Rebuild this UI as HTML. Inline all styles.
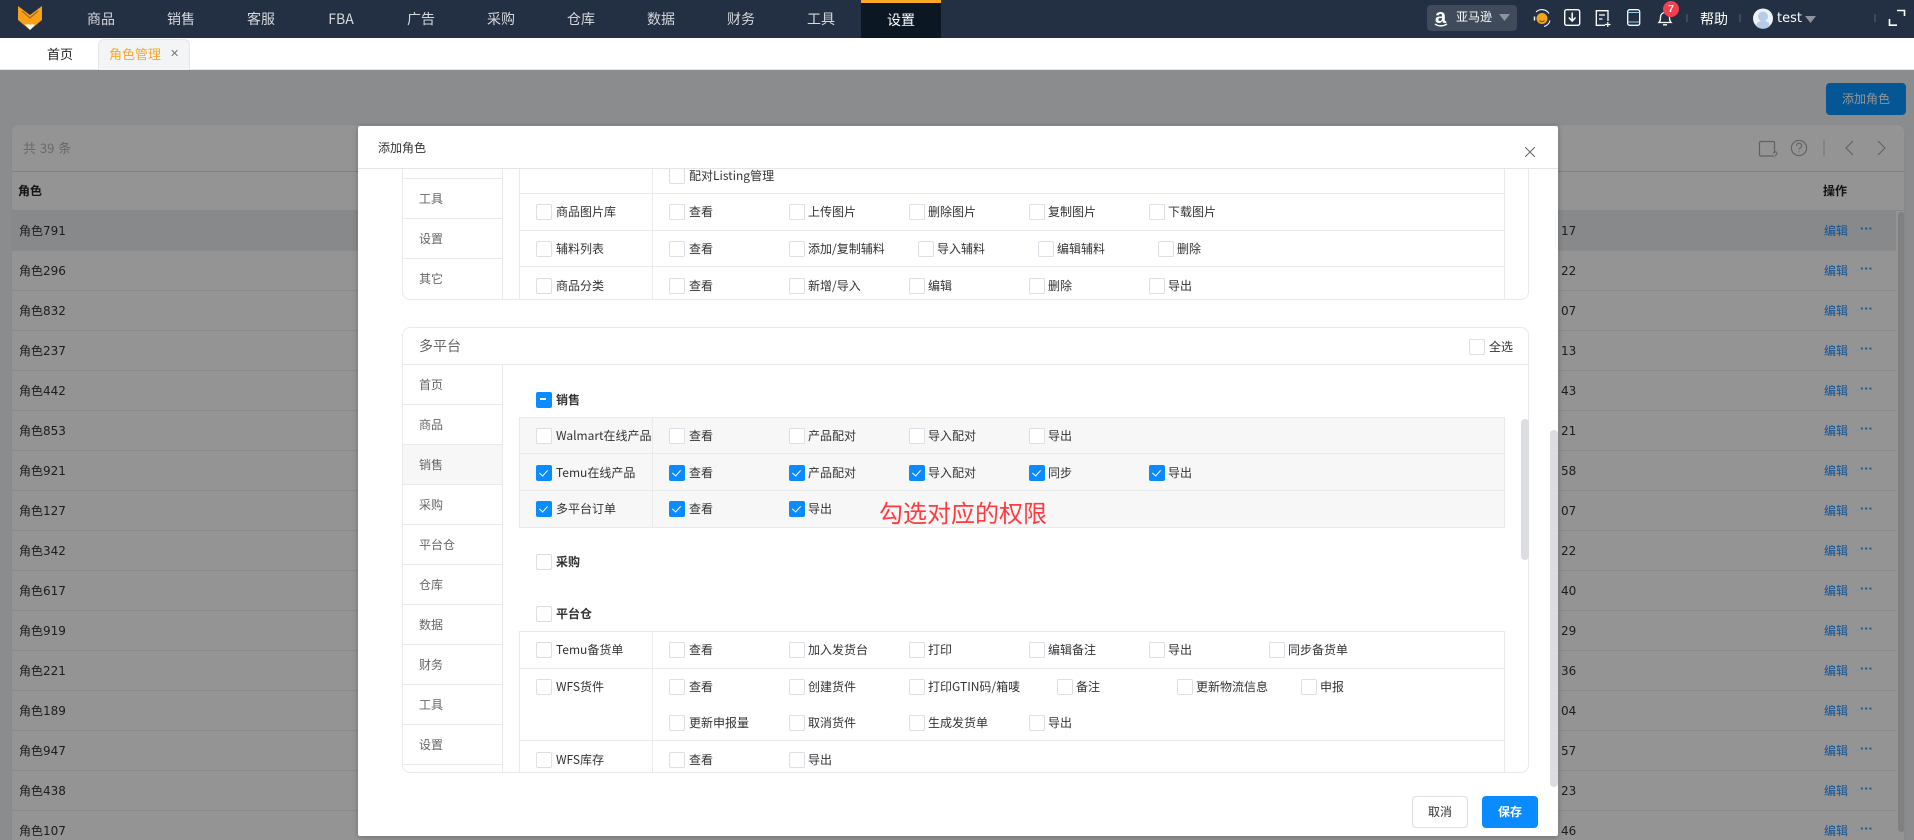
<!DOCTYPE html>
<html lang="zh"><head><meta charset="utf-8"><title>角色管理</title>
<style>
*{box-sizing:border-box}
html,body{margin:0;padding:0;width:1914px;height:840px;overflow:hidden;background:#f0f2f5;font:12px/16px "Liberation Sans","Noto Sans CJK SC",sans-serif;color:#333}
body{position:relative;font-family:"Noto Sans CJK SC","Liberation Sans",sans-serif}
div,span,label,svg{position:absolute}
.x{white-space:nowrap;line-height:16px}
.l{background:#e8eaec}
#nav{left:0;top:0;width:1914px;height:38px;background:#232f42;z-index:7}
#nav .n{top:0;width:80px;height:38px;text-align:center;line-height:38px;font-size:14px;color:#d5d8dc}
#tabs{left:0;top:38px;width:1914px;height:32px;background:#fff;border-bottom:1px solid #e4e6e9;z-index:7}
#ov{left:0;top:70px;width:1914px;height:770px;background:rgba(0,0,0,.42);z-index:5}
#card{left:11px;top:124px;width:1894px;height:716px;background:#fff;border:1px solid #eee;border-bottom:0;border-radius:8px 8px 0 0;overflow:hidden}
.r{left:0;width:1884px;height:40px;border-bottom:1px solid #eef0f2}
.r b,.r i,.r u,.r em{position:absolute;font-style:normal;font-weight:400;text-decoration:none;top:12px;line-height:16px;font-size:12px;color:#333}
.r b,.r i{font-family:"DejaVu Sans","Noto Sans CJK SC",sans-serif}
.r b{left:7px}.r i{left:1549px}.r u{left:1812px;color:#1f8fff;font-size:12px}
.r em{left:1848px;top:10px;color:#1f8fff;font:700 13px/16px "Liberation Sans",sans-serif}
#modal{left:358px;top:126px;width:1200px;height:710px;background:#fff;z-index:6;box-shadow:0 1px 6px rgba(0,0,0,.25);border-radius:2px}
#clip{left:0;top:43px;width:1200px;height:625px;overflow:hidden}
#in{left:-358px;top:-169px;width:1914px;height:840px}
.p{height:16px;padding-left:19px;line-height:15px;white-space:nowrap;font-size:12px;color:#333}
.q{padding-left:20px}
.p:before{content:"";position:absolute;left:0;top:0;width:14px;height:14px;background:#fff;border:1px solid #dcdfe6;border-radius:2px}
.k:before{background:#0a8bff;border-color:#0a8bff}
.k:after{content:"";position:absolute;left:4.5px;top:2.5px;width:4px;height:7px;border:solid #fff;border-width:0 1.2px 1.2px 0;transform:rotate(42deg)}
.m:before{background:#0a8bff;border-color:#0a8bff}
.m:after{content:"";position:absolute;left:4px;top:6px;width:6px;height:1.5px;background:#fff}
.g{font-weight:700;color:#333}
.a{color:#666;left:419px}
.box{border:1px solid #e8eaec}
</style></head><body>

<div id="card">
<div style="left:11px;top:15px;font-size:13px;line-height:16px;color:#b5b5b5;word-spacing:1px" class="x">共 39 条</div>
<div class="l" style="left:0;top:46px;width:1892px;height:1px;background:#ddd"></div>
<div class="x" style="left:6px;top:58px;font-weight:700;color:#222">角色</div>
<div class="x" style="left:1811px;top:58px;font-weight:700;color:#222">操作</div>
<div class="l" style="left:0;top:85px;width:1892px;height:1px"></div>
<div style="left:0;top:86px;width:1892px;height:640px">
<div class="r" style="top:0;background:#e8ecf0"><b>角色791</b><i>17</i><u>编辑</u><em>···</em></div>
<div class="r" style="top:40px"><b>角色296</b><i>22</i><u>编辑</u><em>···</em></div>
<div class="r" style="top:80px"><b>角色832</b><i>07</i><u>编辑</u><em>···</em></div>
<div class="r" style="top:120px"><b>角色237</b><i>13</i><u>编辑</u><em>···</em></div>
<div class="r" style="top:160px"><b>角色442</b><i>43</i><u>编辑</u><em>···</em></div>
<div class="r" style="top:200px"><b>角色853</b><i>21</i><u>编辑</u><em>···</em></div>
<div class="r" style="top:240px"><b>角色921</b><i>58</i><u>编辑</u><em>···</em></div>
<div class="r" style="top:280px"><b>角色127</b><i>07</i><u>编辑</u><em>···</em></div>
<div class="r" style="top:320px"><b>角色342</b><i>22</i><u>编辑</u><em>···</em></div>
<div class="r" style="top:360px"><b>角色617</b><i>40</i><u>编辑</u><em>···</em></div>
<div class="r" style="top:400px"><b>角色919</b><i>29</i><u>编辑</u><em>···</em></div>
<div class="r" style="top:440px"><b>角色221</b><i>36</i><u>编辑</u><em>···</em></div>
<div class="r" style="top:480px"><b>角色189</b><i>04</i><u>编辑</u><em>···</em></div>
<div class="r" style="top:520px"><b>角色947</b><i>57</i><u>编辑</u><em>···</em></div>
<div class="r" style="top:560px"><b>角色438</b><i>23</i><u>编辑</u><em>···</em></div>
<div class="r" style="top:600px"><b>角色107</b><i>46</i><u>编辑</u><em>···</em></div>
</div>
<div style="left:1886px;top:87px;width:7px;height:620px;background:#dcdcdc;border-radius:4px"></div>
</div>
<div style="left:1826px;top:83px;width:80px;height:32px;background:#0894ff;border-radius:4px;color:#fff;text-align:center;line-height:32px">添加角色</div>
<svg style="left:1750px;top:135px" width="150" height="26" viewBox="0 0 150 26" fill="none" stroke="#a8a8a8">
<path d="M24 21H10.500A1.500 1.500 0 0 1 9.500 19.500V7.500A1.500 1.500 0 0 1 10.500 6.500H23.500A1.500 1.500 0 0 1 24.500 7.500V18" stroke-width="1.200"/>
<path d="M23.500 18.500a1.700 1.700 0 1 1 2.500 1.500c-.7.400-.9.800-.9 1.200M25.100 22.500v.8" stroke-width="1"/>
<circle cx="49" cy="13" r="7.600" stroke-width="1.100"/>
<path d="M46.500 10.800a2.500 2.500 0 1 1 3.500 2.300c-.7.300-1 .8-1 1.500M49 16.200v1" stroke-width="1.100"/>
<path d="M74 4.500v17" stroke="#e4e4e4" stroke-width="2"/>
<path d="M103 6l-7 7 7 7M128 6l7 7-7 7" stroke-width="1.100"/>
</svg>
<div id="ov"></div>

<div id="modal">
<div class="x" style="left:20px;top:14px;color:#333">添加角色</div>
<svg style="left:1167px;top:21px" width="10" height="10" viewBox="0 0 10 10" stroke="#666" stroke-width="1" fill="none"><path d="M0 0L10 10M10 0L0 10"/></svg>
<div class="l" style="left:0;top:42px;width:1200px;height:1px;background:#e4e5ea"></div>
<div id="clip"><div id="in">
<!-- card 1 -->
<div class="box" style="left:402px;top:100px;width:1127px;height:200px;border-radius:8px"></div>
<div class="l" style="left:502px;top:160px;width:1px;height:139px"></div>
<div class="l" style="left:402px;top:178px;width:101px;height:1px"></div>
<div class="l" style="left:402px;top:218px;width:101px;height:1px"></div>
<div class="l" style="left:402px;top:258px;width:101px;height:1px"></div>
<div class="l" style="left:519px;top:160px;width:1px;height:139px"></div>
<div class="l" style="left:652px;top:160px;width:1px;height:139px"></div>
<div class="l" style="left:1504px;top:160px;width:1px;height:139px"></div>
<div class="l" style="left:519px;top:193px;width:986px;height:1px"></div>
<div class="l" style="left:519px;top:230px;width:986px;height:1px"></div>
<div class="l" style="left:519px;top:266px;width:986px;height:1px"></div>
<div class="x a" style="top:191px">工具</div>
<div class="x a" style="top:231px">设置</div>
<div class="x a" style="top:271px">其它</div>
<label class="p q" style="left:669px;top:168px">配对Listing管理</label>
<label class="p q" style="left:536px;top:204px">商品图片库</label>
<label class="p q" style="left:669px;top:204px">查看</label>
<label class="p" style="left:789px;top:204px">上传图片</label>
<label class="p" style="left:909px;top:204px">删除图片</label>
<label class="p" style="left:1029px;top:204px">复制图片</label>
<label class="p" style="left:1149px;top:204px">下载图片</label>
<label class="p q" style="left:536px;top:241px">辅料列表</label>
<label class="p q" style="left:669px;top:241px">查看</label>
<label class="p" style="left:789px;top:241px">添加/复制辅料</label>
<label class="p" style="left:918px;top:241px">导入辅料</label>
<label class="p" style="left:1038px;top:241px">编辑辅料</label>
<label class="p" style="left:1158px;top:241px">删除</label>
<label class="p q" style="left:536px;top:278px">商品分类</label>
<label class="p q" style="left:669px;top:278px">查看</label>
<label class="p" style="left:789px;top:278px">新增/导入</label>
<label class="p" style="left:909px;top:278px">编辑</label>
<label class="p" style="left:1029px;top:278px">删除</label>
<label class="p" style="left:1149px;top:278px">导出</label>

<!-- card 2 -->
<div class="box" style="left:402px;top:327px;width:1127px;height:446px;border-radius:8px"></div>
<div class="x" style="left:419px;top:338px;font-size:14px;color:#666">多平台</div>
<label class="p q" style="left:1469px;top:339px">全选</label>
<div class="l" style="left:402px;top:364px;width:1127px;height:1px"></div>
<div style="left:403px;top:445px;width:99px;height:39px;background:#f7f7f7"></div>
<div class="l" style="left:502px;top:364px;width:1px;height:408px"></div>
<div class="l" style="left:402px;top:404px;width:101px;height:1px"></div>
<div class="l" style="left:402px;top:444px;width:101px;height:1px"></div>
<div class="l" style="left:402px;top:484px;width:101px;height:1px"></div>
<div class="l" style="left:402px;top:524px;width:101px;height:1px"></div>
<div class="l" style="left:402px;top:564px;width:101px;height:1px"></div>
<div class="l" style="left:402px;top:604px;width:101px;height:1px"></div>
<div class="l" style="left:402px;top:644px;width:101px;height:1px"></div>
<div class="l" style="left:402px;top:684px;width:101px;height:1px"></div>
<div class="l" style="left:402px;top:724px;width:101px;height:1px"></div>
<div class="l" style="left:402px;top:764px;width:101px;height:1px"></div>
<div class="x a" style="top:377px">首页</div>
<div class="x a" style="top:417px">商品</div>
<div class="x a" style="top:457px">销售</div>
<div class="x a" style="top:497px">采购</div>
<div class="x a" style="top:537px">平台仓</div>
<div class="x a" style="top:577px">仓库</div>
<div class="x a" style="top:617px">数据</div>
<div class="x a" style="top:657px">财务</div>
<div class="x a" style="top:697px">工具</div>
<div class="x a" style="top:737px">设置</div>

<label class="p m g q" style="left:536px;top:392px">销售</label>
<div class="box" style="left:519px;top:417px;width:986px;height:111px;background:#f7f7f7"></div>
<div class="l" style="left:519px;top:453px;width:986px;height:1px"></div>
<div class="l" style="left:519px;top:490px;width:986px;height:1px"></div>
<div class="l" style="left:652px;top:417px;width:1px;height:111px"></div>
<label class="p q" style="left:536px;top:428px">Walmart在线产品</label>
<label class="p q" style="left:669px;top:428px">查看</label>
<label class="p" style="left:789px;top:428px">产品配对</label>
<label class="p" style="left:909px;top:428px">导入配对</label>
<label class="p" style="left:1029px;top:428px">导出</label>
<label class="p k q" style="left:536px;top:465px">Temu在线产品</label>
<label class="p k q" style="left:669px;top:465px">查看</label>
<label class="p k" style="left:789px;top:465px">产品配对</label>
<label class="p k" style="left:909px;top:465px">导入配对</label>
<label class="p k" style="left:1029px;top:465px">同步</label>
<label class="p k" style="left:1149px;top:465px">导出</label>
<label class="p k q" style="left:536px;top:501px">多平台订单</label>
<label class="p k q" style="left:669px;top:501px">查看</label>
<label class="p k" style="left:789px;top:501px">导出</label>
<div class="x" style="left:879px;top:496px;font-size:24px;line-height:32px;color:#ff3b40">勾选对应的权限</div>

<label class="p g q" style="left:536px;top:554px">采购</label>
<label class="p g q" style="left:536px;top:606px">平台仓</label>
<div class="l" style="left:519px;top:631px;width:986px;height:1px"></div>
<div class="l" style="left:519px;top:668px;width:986px;height:1px"></div>
<div class="l" style="left:519px;top:740px;width:986px;height:1px"></div>
<div class="l" style="left:519px;top:631px;width:1px;height:141px"></div>
<div class="l" style="left:652px;top:631px;width:1px;height:141px"></div>
<div class="l" style="left:1504px;top:631px;width:1px;height:141px"></div>
<label class="p q" style="left:536px;top:642px">Temu备货单</label>
<label class="p q" style="left:669px;top:642px">查看</label>
<label class="p" style="left:789px;top:642px">加入发货台</label>
<label class="p" style="left:909px;top:642px">打印</label>
<label class="p" style="left:1029px;top:642px">编辑备注</label>
<label class="p" style="left:1149px;top:642px">导出</label>
<label class="p" style="left:1269px;top:642px">同步备货单</label>
<label class="p q" style="left:536px;top:679px">WFS货件</label>
<label class="p q" style="left:669px;top:679px">查看</label>
<label class="p" style="left:789px;top:679px">创建货件</label>
<label class="p" style="left:909px;top:679px">打印GTIN码/箱唛</label>
<label class="p" style="left:1057px;top:679px">备注</label>
<label class="p" style="left:1177px;top:679px">更新物流信息</label>
<label class="p" style="left:1301px;top:679px">申报</label>
<label class="p q" style="left:669px;top:715px">更新申报量</label>
<label class="p" style="left:789px;top:715px">取消货件</label>
<label class="p" style="left:909px;top:715px">生成发货单</label>
<label class="p" style="left:1029px;top:715px">导出</label>
<label class="p q" style="left:536px;top:752px">WFS库存</label>
<label class="p q" style="left:669px;top:752px">查看</label>
<label class="p" style="left:789px;top:752px">导出</label>
<div style="left:1521px;top:419px;width:8px;height:141px;background:#dcdde0;border-radius:4px"></div>
</div></div>
<div style="left:1192px;top:304px;width:8px;height:357px;background:#dcdde0;border-radius:4px"></div>
<div style="left:1054px;top:670px;width:56px;height:32px;background:#fff;border:1px solid #dcdfe6;border-radius:4px;text-align:center;line-height:30px;color:#333">取消</div>
<div style="left:1124px;top:670px;width:56px;height:32px;background:#0a8bff;border-radius:4px;text-align:center;line-height:32px;color:#fff;font-weight:700">保存</div>
</div>

<div id="tabs">
<div class="x" style="left:47px;top:7px;font-size:13px;line-height:18px;color:#222">首页</div>
<div style="left:98px;top:1px;width:92px;height:31px;background:#f3f4f6;border:1px solid #e4e6e9;border-bottom:0;border-radius:6px 6px 0 0"></div>
<div class="x" style="left:109px;top:7px;font-size:13px;line-height:18px;color:#f9a825">角色管理</div>
<div class="x" style="left:170px;top:7px;font-size:11px;line-height:16px;color:#777">✕</div>
</div>

<div id="nav">
<svg style="left:18px;top:6px" width="24" height="24" viewBox="0 0 24 24"><path d="M0 0L12 9L24 0V14L12 24L0 14Z" fill="#f9a11b"/><path d="M4 5L12 12L20 5" fill="none" stroke="#a8691a" stroke-width="1.200"/><path d="M7 18.500H17L12 24Z" fill="#fff"/></svg>
<div class="n" style="left:61px">商品</div>
<div class="n" style="left:141px">销售</div>
<div class="n" style="left:221px">客服</div>
<div class="n" style="left:301px">FBA</div>
<div class="n" style="left:381px">广告</div>
<div class="n" style="left:461px">采购</div>
<div class="n" style="left:541px">仓库</div>
<div class="n" style="left:621px">数据</div>
<div class="n" style="left:701px">财务</div>
<div class="n" style="left:781px">工具</div>
<div class="n" style="left:861px;background:#0c1724;color:#fff;border-top:3px solid #f9a825;line-height:34px">设置</div>

<div style="left:1427px;top:5px;width:90px;height:26px;background:#3f4a5a;border-radius:4px"></div>
<div class="x" style="left:1435px;top:7px;font:700 20px/20px 'Liberation Sans',sans-serif;color:#fff">a</div>
<div class="x" style="left:1456px;top:9px;color:#fff">亚马逊</div>
<svg style="left:1425px;top:0" width="490" height="38" viewBox="0 0 490 38" fill="none">
<path d="M10 24c3 2.500 8 2.500 12 0" stroke="#fff" stroke-width="1.400"/>
<path d="M74 14h11l-5.500 7z" fill="#8d949f"/>
<circle cx="117" cy="18.500" r="5.500" fill="#f5a31a"/>
<path d="M111 12a8.500 8.500 0 0 1 13 1.500M125 20.500a8.500 8.500 0 0 1-6 6" stroke="#fff" stroke-width="1.100"/>
<path d="M109.500 16.500v4" stroke="#fff" stroke-width="1.400"/>
<path d="M114.500 20.500c1.500 1.500 3.500 1.500 5 0" stroke="#6b4a12"/>
<rect x="139.700" y="9.700" width="15" height="15.600" rx="2" stroke="#fff" stroke-width="1.400"/>
<path d="M147.200 12.500v8M143.800 17.500l3.400 3.500 3.400-3.500" stroke="#fff" stroke-width="1.500"/>
<path d="M183 21V10.700h-11.700v14.600H180" stroke="#fff" stroke-width="1.300"/>
<path d="M174 15h6M174 19h3.500M180 24.500h5.500M182.800 22v5" stroke="#fff" stroke-width="1.200"/>
<rect x="202.700" y="9.700" width="12" height="15.600" rx="2" stroke="#fff" stroke-width="1.300"/>
<path d="M203 12.500h11.500M203 22h11.500" stroke="#8fd0f0" stroke-width="1"/>
<path d="M234 22.500c1.500-1.500 1.500-3 1.500-5.500a4.500 4.500 0 0 1 9 0c0 2.500 0 4 1.500 5.500zM238 24.800h4" stroke="#fff" stroke-width="1.300"/>
<path d="M262 14v8M315 14v8M450 14v8" stroke="#59626f" stroke-width="1"/>
<path d="M380 16h11l-5.500 7z" fill="#8d949f"/>
<path d="M472 10.500h7.500V16M464.500 19v6.200H472" stroke="#fff" stroke-width="1.600"/>
<circle cx="338" cy="18.500" r="10" fill="#eef2f8"/>
<circle cx="338" cy="16.500" r="5" fill="#b6cbe8"/>
<path d="M331 26c1-4 3-5 7-5s6 1 7 5a10 10 0 0 1-14 0z" fill="#b6cbe8"/>
</svg>
<div style="left:1663px;top:1px;width:16px;height:16px;border-radius:50%;background:#f43f4e;color:#fff;font:700 10.500px/16px 'Liberation Sans',sans-serif;text-align:center">7</div>
<div class="x" style="left:1700px;top:10px;font-size:14px;line-height:18px;color:#fff">帮助</div>
<div class="x" style="left:1777px;top:11px;font:13px/16px 'DejaVu Sans',sans-serif;color:#fff">test</div>
</div>
</body></html>
